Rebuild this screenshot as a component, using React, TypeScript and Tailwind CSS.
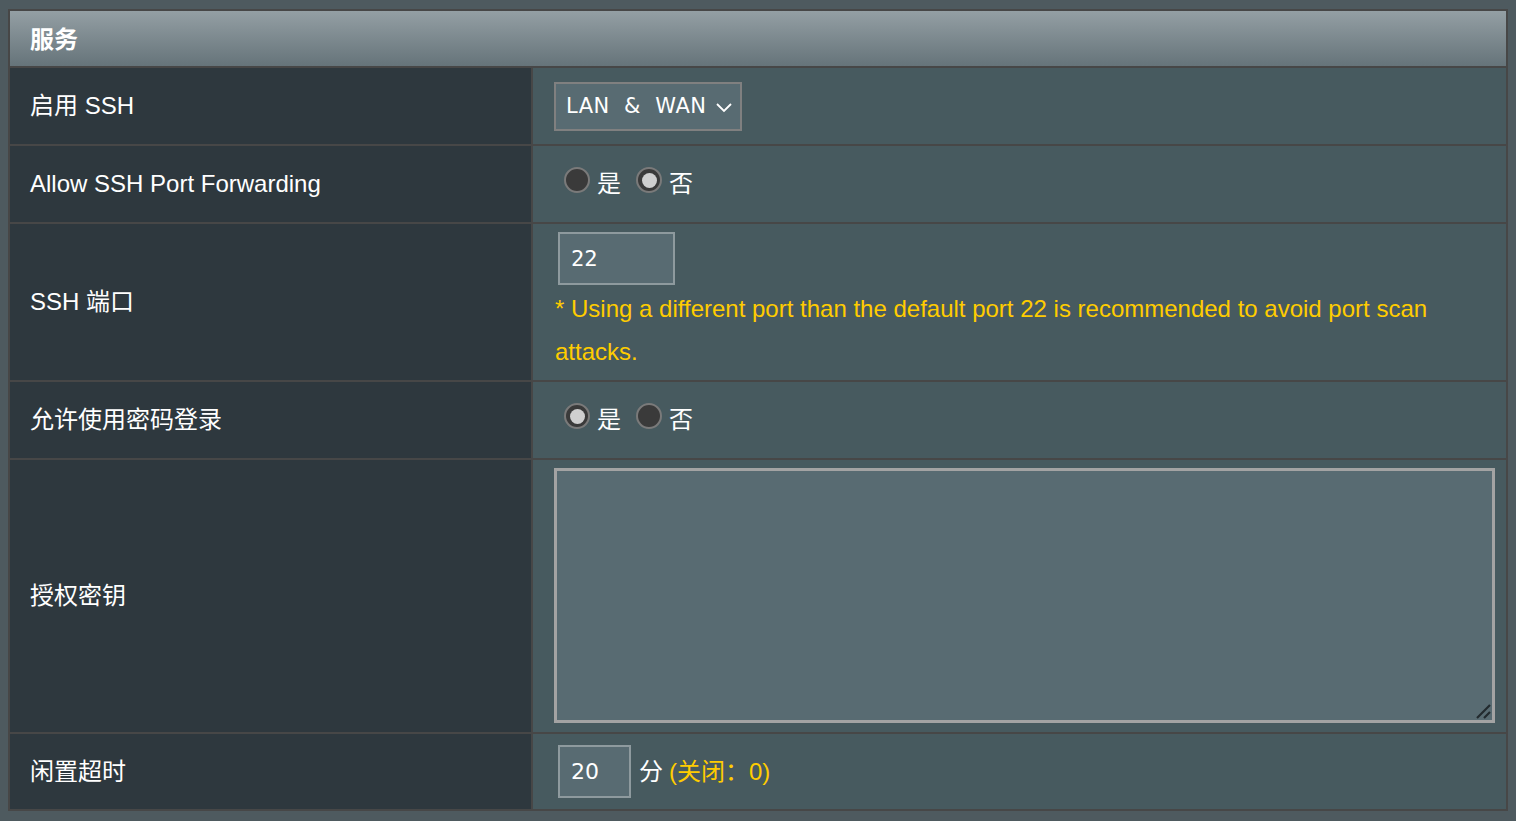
const font = "font-['Liberation_Sans','Noto_Sans_CJK_SC',sans-serif]"

function Radio({ checked }: { checked: boolean }) {
    return (
        <span className="inline-flex h-[26px] w-[26px] -translate-y-[4px] items-center justify-center rounded-full border-2 border-[#7a7a7a] bg-[#3a3a3a]">
            {checked && <span className="h-[15px] w-[15px] rounded-full bg-[#cfcfcf]" />}
        </span>
    )
}

function YesNo({ yes }: { yes: boolean }) {
    return (
        <div className="flex items-center pl-[31px] text-[24px] text-white">
            <Radio checked={yes} />
            <span className="ml-[7px]">是</span>
            <span className="ml-[15px] flex items-center"><Radio checked={!yes} /></span>
            <span className="ml-[7px]">否</span>
        </div>
    )
}

type RowProps = {
    label: string
    h: string
    children: React.ReactNode
}

function Row({ label, h, children }: RowProps) {
    return (
        <div className={`flex ${h} border-t-2 border-[#474747]`}>
            <div className="flex w-[521px] shrink-0 items-center bg-[#2e383e] pl-[20px] text-[24px] text-white">
                {label}
            </div>
            <div className="flex flex-1 flex-col justify-center border-l-2 border-[#474747] bg-[#475a5f]">
                {children}
            </div>
        </div>
    )
}

export default function App() {
    return (
        <div className={`min-h-screen bg-[#4e5a5f] px-[8px] pt-[9px] ${font}`}>
            <div className="border-2 border-[#474747]">
                <div className="flex h-[55px] items-center bg-gradient-to-b from-[#949fa4] to-[#66747a] pl-[20px] pt-[3px] text-[24px] font-bold text-white">
                    服务
                </div>
                <Row label="启用 SSH" h="h-[78px]">
                    <div className="pl-[21px]">
                        <div className="inline-flex h-[49px] w-[188px] items-center border-2 border-[#808080] bg-[#586b72] pl-[10px] pt-[2px] font-['DejaVu_Sans',sans-serif] text-[21px] text-white">
                            <span className="tracking-[0.5px]">LAN&nbsp;&nbsp;&amp;&nbsp;&nbsp;WAN</span>
                            <svg width="18" height="12" viewBox="0 0 18 12" className="ml-[8px]">
                                <path d="M2 3 L9 10 L16 3" fill="none" stroke="white" strokeWidth="1.8" />
                            </svg>
                        </div>
                    </div>
                </Row>
                <Row label="Allow SSH Port Forwarding" h="h-[78px]">
                    <YesNo yes={false} />
                </Row>
                <Row label="SSH 端口" h="h-[158px]">
                    <div className="flex h-full flex-col pl-[22px] pt-[8px]">
                        <div className="ml-[3px] flex h-[53px] w-[117px] items-center border-2 border-[#8e9a9e] bg-[#586b72] pl-[11px] font-['DejaVu_Sans_Mono',monospace] text-[22px] text-white">
                            22
                        </div>
                        <div className="pr-[60px] pt-[2px] text-[24px] leading-[43px] text-[#ffcc00]">
                            * Using a different port than the default port 22 is recommended to avoid port scan attacks.
                        </div>
                    </div>
                </Row>
                <Row label="允许使用密码登录" h="h-[78px]">
                    <YesNo yes={true} />
                </Row>
                <Row label="授权密钥" h="h-[274px]">
                    <div className="flex h-full pb-[9px] pl-[21px] pr-[11px] pt-[8px]">
                        <div className="relative h-full w-full">
                            <textarea className="h-full w-full resize-none border-[3px] border-[#a3a3a3] bg-[#586b72] text-white outline-none" />
                            <svg width="16" height="16" viewBox="0 0 16 16" className="pointer-events-none absolute bottom-[4px] right-[4px]">
                                <path d="M2 15 L15 2 M9 15 L15 9" stroke="#222a2e" strokeWidth="2.2" />
                            </svg>
                        </div>
                    </div>
                </Row>
                <Row label="闲置超时" h="h-[77px]">
                    <div className="flex items-center pl-[25px] text-[24px]">
                        <div className="flex h-[53px] w-[73px] items-center border-2 border-[#8e9a9e] bg-[#586b72] pl-[11px] font-['DejaVu_Sans',sans-serif] text-[22px] text-white">
                            20
                        </div>
                        <span className="ml-[8px] text-white">分</span>
                        <span className="ml-[6px] text-[#ffcc00]">(关闭：0)</span>
                    </div>
                </Row>
            </div>
        </div>
    )
}
